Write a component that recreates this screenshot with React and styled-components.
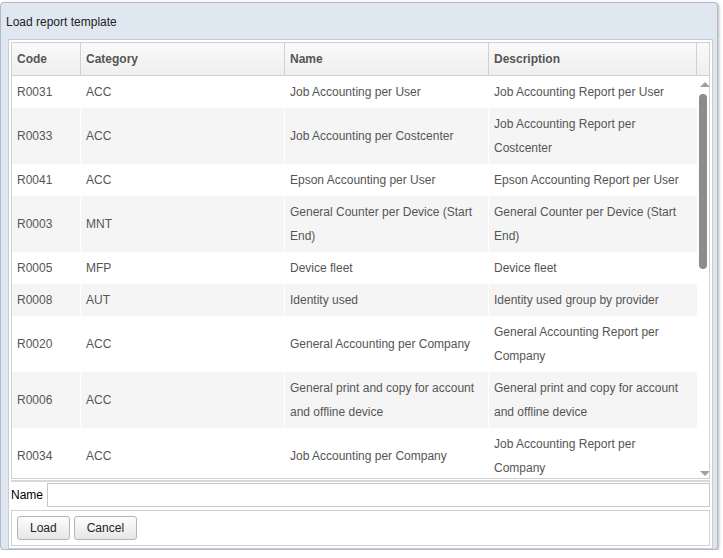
import React from 'react';
import styled, { createGlobalStyle } from 'styled-components';

const Global = createGlobalStyle`
  body { margin: 0; background: #fff; font-family: "Liberation Sans", Arial, sans-serif; }
`;

const rows = [
  ['R0031', 'ACC', 'Job Accounting per User', 'Job Accounting Report per User'],
  ['R0033', 'ACC', 'Job Accounting per Costcenter', 'Job Accounting Report per Costcenter'],
  ['R0041', 'ACC', 'Epson Accounting per User', 'Epson Accounting Report per User'],
  ['R0003', 'MNT', 'General Counter per Device (Start End)', 'General Counter per Device (Start End)'],
  ['R0005', 'MFP', 'Device fleet', 'Device fleet'],
  ['R0008', 'AUT', 'Identity used', 'Identity used group by provider'],
  ['R0020', 'ACC', 'General Accounting per Company', 'General Accounting Report per Company'],
  ['R0006', 'ACC', 'General print and copy for account and offline device', 'General print and copy for account and offline device'],
  ['R0034', 'ACC', 'Job Accounting per Company', 'Job Accounting Report per Company'],
];

const cols = '69px 204px 204px 208px';

const Dialog = styled.div`
  margin: 2px 5px 0 0;
  height: 548px;
  box-sizing: border-box;
  background: #dfe8f1;
  border: 1px solid #b5b8c8;
  border-radius: 4px;
  box-shadow: 1px 1px 3px rgba(0,0,0,0.3);
  display: flex;
  flex-direction: column;
`;

const Title = styled.div`
  height: 39px;
  padding: 12px 0 0 5px;
  box-sizing: border-box;
  font-size: 12px;
  color: #222;
`;

const Body = styled.div`
  margin: 0 4px 0 7px;
  background: #fff;
  border: 1px solid #c8ccd4;
  padding: 2px 2px 2px 2px;
  display: flex;
  flex-direction: column;
`;

const Grid = styled.div`
  border: 1px solid #d0d0d0;
  position: relative;
`;

const HeadRow = styled.div`
  display: grid;
  grid-template-columns: ${cols} 1fr;
  height: 32px;
  background: linear-gradient(#fafafa, #efefef);
  border-bottom: 1px solid #d0d0d0;
`;

const HeadCell = styled.div`
  font-size: 12px;
  font-weight: bold;
  color: #555;
  padding: 9px 5px 0;
  border-right: 1px solid #d0d0d0;
`;

const Scroller = styled.div`
  height: 402px;
  overflow: hidden;
  display: grid;
  grid-template-columns: 1fr 16px;
`;

const Row = styled.div`
  display: grid;
  grid-template-columns: ${cols};
  background: ${p => (p.$alt ? '#f5f5f5' : '#fff')};
  min-height: 32px;
`;

const Cell = styled.div`
  font-size: 12px;
  color: #555;
  line-height: 24px;
  padding: ${p => (p.$last ? '4px 12px 4px 5px' : '4px 5px')};
  display: flex;
  align-items: center;
  border-right: ${p => (p.$last ? 'none' : '1px solid #fff')};
`;

const Bar = styled.div`
  position: relative;
  background: #fff;
`;

const Arrow = styled.div`
  position: absolute;
  left: 3px;
  width: 0;
  height: 0;
  border-left: 5px solid transparent;
  border-right: 5px solid transparent;
  ${p => (p.$down ? 'bottom: 8px; border-top: 5px solid #a0a0a0;' : 'top: 6px; border-bottom: 5px solid #a0a0a0;')}
`;

const Thumb = styled.div`
  position: absolute;
  left: 2px;
  top: 18px;
  width: 8px;
  height: 175px;
  background: #8c8c8c;
  border-radius: 4px;
`;

const NameRow = styled.div`
  display: flex;
  align-items: center;
  margin-top: 1px;
  border-top: 2px solid #d8d8d8;
  height: 26px;
  font-size: 12px;
  color: #000;
`;

const Input = styled.input`
  flex: 1;
  height: 24px;
  margin-left: 4px;
  border: 1px solid #c8c8c8;
  box-sizing: border-box;
`;

const Buttons = styled.div`
  margin-top: 2px;
  border: 1px solid #d0d0d0;
  height: 34px;
  display: flex;
  align-items: center;
  gap: 4px;
  padding-left: 5px;
`;

const Button = styled.button`
  height: 24px;
  padding: 0 12px;
  font-family: inherit;
  font-size: 12px;
  color: #222;
  border: 1px solid #b5b5b5;
  border-radius: 3px;
  background: linear-gradient(#fdfdfd, #e6e6e6);
`;

export default function App() {
  return (
    <>
      <Global />
      <Dialog>
        <Title>Load report template</Title>
        <Body>
          <Grid>
            <HeadRow>
              <HeadCell>Code</HeadCell>
              <HeadCell>Category</HeadCell>
              <HeadCell>Name</HeadCell>
              <HeadCell>Description</HeadCell>
              <HeadCell style={{ borderRight: 'none' }} />
            </HeadRow>
            <Scroller>
              <div>
                {rows.map((r, i) => (
                  <Row key={r[0]} $alt={i % 2 === 1}>
                    {r.map((c, j) => (
                      <Cell key={j} $last={j === 3}>{c}</Cell>
                    ))}
                  </Row>
                ))}
              </div>
              <Bar>
                <Arrow />
                <Thumb />
                <Arrow $down />
              </Bar>
            </Scroller>
          </Grid>
          <NameRow>
            Name
            <Input />
          </NameRow>
          <Buttons>
            <Button>Load</Button>
            <Button>Cancel</Button>
          </Buttons>
        </Body>
      </Dialog>
    </>
  );
}
